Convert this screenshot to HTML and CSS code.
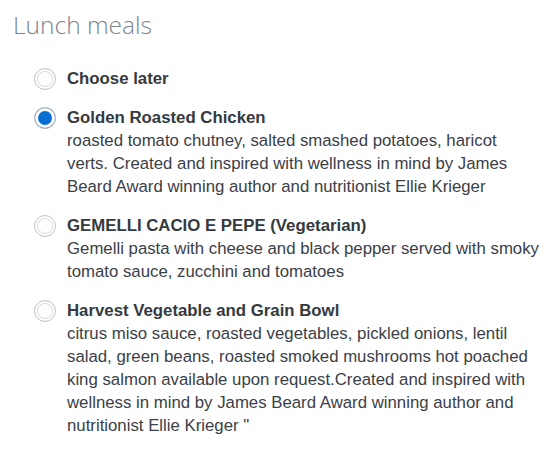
FILE: index.html
```html
<!DOCTYPE html>
<html>
<head>
<meta charset="utf-8">
<link rel="stylesheet" href="styles.css">
</head>
<body>
<h1 class="heading">Lunch meals</h1>
<div class="options">
  <label class="option">
    <span class="radio"></span>
    <span class="body">
      <span class="name">Choose later</span>
    </span>
  </label>
  <label class="option">
    <span class="radio checked"></span>
    <span class="body">
      <span class="name">Golden Roasted Chicken</span>
      <span class="desc">roasted tomato chutney, salted smashed potatoes, haricot verts. Created and inspired with wellness in mind by James Beard Award winning author and nutritionist Ellie Krieger</span>
    </span>
  </label>
  <label class="option">
    <span class="radio"></span>
    <span class="body">
      <span class="name">GEMELLI CACIO E PEPE (Vegetarian)</span>
      <span class="desc">Gemelli pasta with cheese and black pepper served with smoky tomato sauce, zucchini and tomatoes</span>
    </span>
  </label>
  <label class="option">
    <span class="radio"></span>
    <span class="body">
      <span class="name">Harvest Vegetable and Grain Bowl</span>
      <span class="desc">citrus miso sauce, roasted vegetables, pickled onions, lentil salad, green beans, roasted smoked mushrooms hot poached king salmon available upon request.Created and inspired with wellness in mind by James Beard Award winning author and nutritionist Ellie Krieger "</span>
    </span>
  </label>
</div>
</body>
</html>
```
FILE: styles.css
```css
html, body {
  margin: 0;
  padding: 0;
  background: #ffffff;
}
body {
  width: 545px;
  font-family: "Liberation Sans", Arial, sans-serif;
}
.heading {
  margin: 0;
  padding: 8px 0 0 13px;
  font-family: "Open Sans", sans-serif;
  font-weight: 300;
  font-size: 24.5px;
  line-height: 34px;
  color: #7b858f;
}
.options {
  display: flex;
  flex-direction: column;
  gap: 16px;
  padding: 25px 0 0 34px;
}
.option {
  display: flex;
  gap: 11px;
  align-items: flex-start;
}
.radio {
  flex: none;
  width: 22px;
  height: 22px;
  margin-top: 1px;
  box-sizing: border-box;
  border-radius: 50%;
  border: 1px solid #c4c4c4;
  background: #ffffff;
  box-shadow: inset 0 0 0 2px #ffffff, inset 0 0 0 3px #dcdcdc;
}
.radio.checked {
  background: #0a6fd2;
  border-color: #b8b8b8;
  box-shadow: inset 0 0 0 3px #ffffff;
}
.body {
  flex: 0 1 473px;
  min-width: 0;
  display: flex;
  flex-direction: column;
  font-size: 16.8px;
  line-height: 23px;
  color: #3b4047;
}
.name {
  font-weight: bold;
  color: #343a40;
}
```
